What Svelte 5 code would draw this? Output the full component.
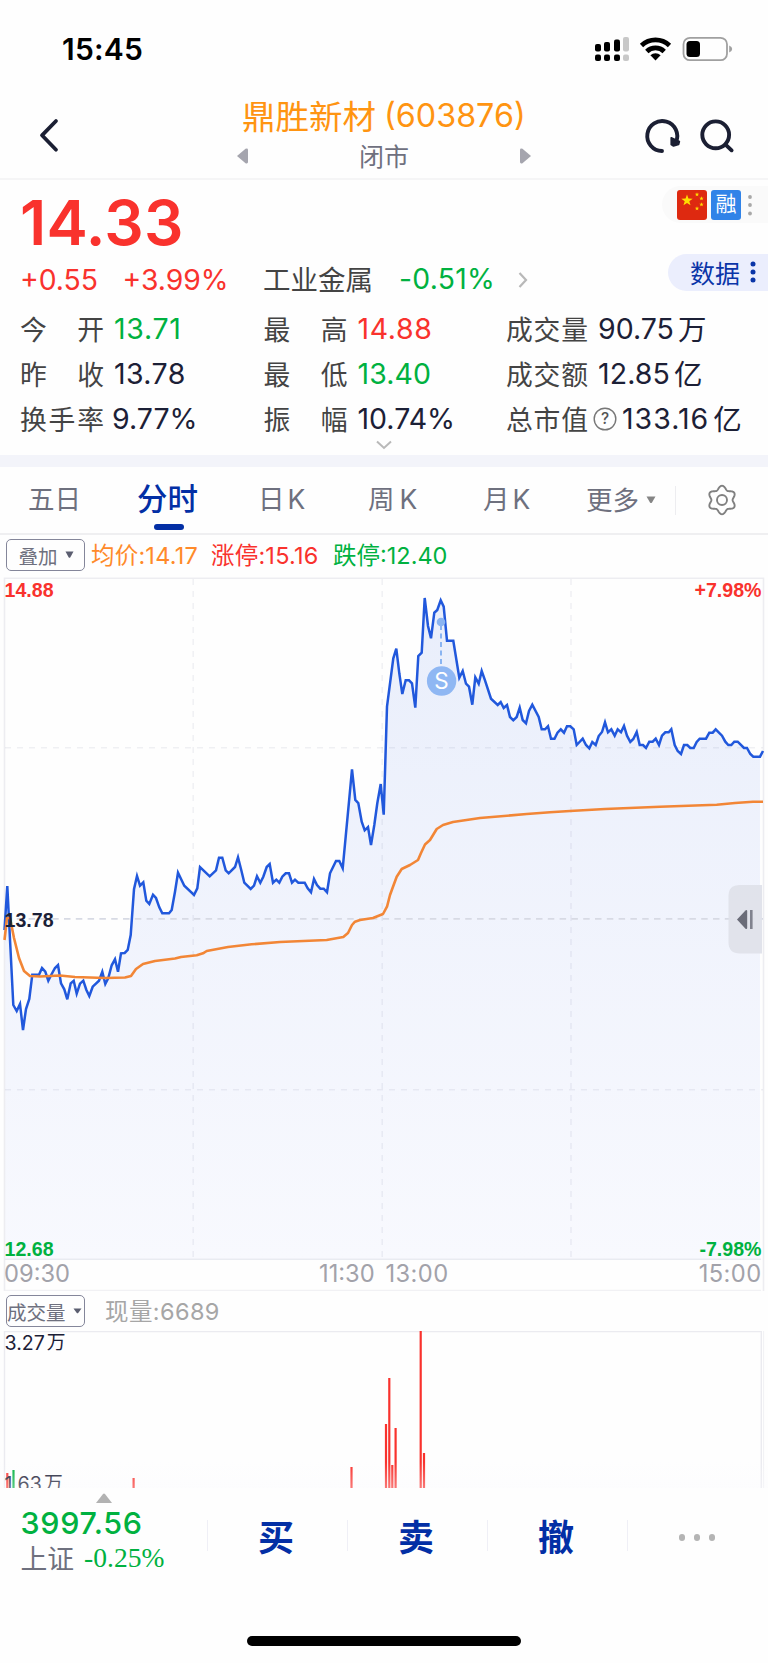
<script>
  const quotes = [
    [
      { label: ['今', '开'], value: '13.71', tone: 'down', space: 0.7 },
      { label: ['最', '高'], value: '14.88', tone: 'up', space: 0.6 },
      { label: ['成', '交', '量'], value: '90.75', unit: '万', space: 0 }
    ],
    [
      { label: ['昨', '收'], value: '13.78', space: 0.4 },
      { label: ['最', '低'], value: '13.40', tone: 'down', space: 0.1 },
      { label: ['成', '交', '额'], value: '12.85', unit: '亿', space: 0.1 }
    ],
    [
      { label: ['换', '手', '率'], value: '9.77%', near: true, space: 0 },
      { label: ['振', '幅'], value: '10.74%', space: 0 },
      { label: ['总', '市', '值'], value: '133.16', unit: '亿', help: true, space: 1 }
    ]
  ];

  // Chart coordinates: the plot's own svg starts at page y = 573.
  const TOP = 573;
  const price = `4.5,930 7.3,886 13.3,1005 16.7,1011 20,1004 23,1030 26,1009 29.3,999 32.3,974.7 39,974.7 42,968 45.3,971.7 48.3,980.7 51.7,974 55,968 58,965 61,983.3 64.3,989.3 67.3,999.3 70.7,983.3 73.7,980.7 76.7,993.7 80,983.7 83.3,980.7 86.3,989.7 89.3,996 92.7,986.7 99,980.7 102.3,971.7 105.3,984 108.3,978 111.7,965.3 115,959.3 118,971.7 121,953.3 124.7,953 127.7,950 130.7,935 134,889.3 137,876 140,885.7 143.3,882.3 146.3,900.7 149.3,904 153,894.7 156,898 159.3,907.3 162.3,913.3 169,913.3 171.7,910 175,891.7 178,872.7 184.3,885.7 194,895 197.3,888.3 200,867 209.7,876.3 216,870.3 219,857.7 222.3,857.7 225.7,870.3 228.7,873.3 235,867 238,857.3 241.3,870.3 244.3,882.7 250.7,889 254,885.7 257,876.3 260.3,882.7 263.3,876.7 266.7,867 269.7,864 273,882.7 276.3,879.7 279.3,882.7 282.3,876.7 285.7,873.3 289,873.3 292,882.7 295,879.7 298.3,882.7 304.7,882.7 307.7,888.3 311,892.3 314,879 317,885 320.3,888.7 323.7,888.7 327,892.3 330,873.3 336,861 339.3,861 342.7,868.3 345.7,836.7 349,801.7 352,769.3 355.3,800 358.3,803 361.7,821.7 364.7,830.3 368,827 371,845 374.3,825 377.3,803.3 380.7,784 383.7,814.7 387,706.7 393.3,658.3 396.3,648.7 399.3,673.3 402.3,694 405.7,680.3 409,680.3 412,683.3 415.3,707.7 418.3,656 421.7,652.7 424.7,598 428,626 431,638.3 434.3,612.7 437.3,610 440.7,600.3 443.7,606.7 447,640.7 453.3,640.7 459.3,677.7 462.7,671 466,683.7 469,686.7 472.3,704.7 475.3,677.3 478.7,683.7 481.7,671 485,680.3 491,698.7 497.7,705 500.7,702 503.7,708 507,705 510,717 513.3,720.3 516.7,717 519.7,707.7 522.7,720 526,723.3 529,711 532.3,704.7 538.7,717 541.7,729.3 545,729.3 548,726.3 551,738.7 554.5,738.7 557.5,732.7 560.8,729.3 564,732.7 567,726.3 570.3,726.3 573.7,729.3 576.7,745 582.7,738.7 586,745 589.3,748.3 592.3,742 595.7,745 598.7,736 602,732 605,722.3 608,732.3 611.3,729.3 614.7,735.7 617.7,729.3 621,732.3 624,726 627,735.7 630.3,742 633.3,739 636.7,732 639.7,745 643,745 646,748 649.3,741.7 652.7,741.7 655.7,738.7 659,745 662,735.7 665.3,732.3 668.7,732.3 671.3,729.3 674.7,745 677.7,751 681,754 684,745 687.3,745 690.3,748 693.7,748 696.7,742 699.7,738.7 706,738.7 709.3,732.7 712.7,732.7 715.7,729.3 722,735.7 725.3,741.7 728.3,745 731.3,745 734.3,741.7 737.7,741.7 744,748 747,748 750.3,754 753.3,756.7 760,756.7`;
  const average = `4.5,940 7,918 10,918 14,938 19,958 24,971 30,976 40,976.5 50,976 60,975.5 75,977 105,978 125,977.5 131,976 136,969 143,964 155,961 167,959.5 175,958.5 181,957 196.7,955.3 203,953.3 206.7,951 228,947 251.7,944.3 280,942 326.7,940 343.3,937 348,933 352,925 355,921.7 360,920 373,918 383,914 387,906.7 390,895 393,886.7 396.7,876.7 401.7,869 410,865 418,860 421,853 425,844.5 430,840 436.7,829 443,825 453,822 480,818 526.7,814 550,812.3 570,811 605,809 660,806.7 716.7,804.7 735,803 753,801.7 763,801.7`;
  const area = `4.5,1259 ${price} 760,1259`;

  const bars = [
    [7.3, 1473, 'red'], [13.5, 1470, 'green'], [133.6, 1478, 'red'], [351.5, 1467, 'red'],
    [386, 1424, 'red'], [389.3, 1378, 'red'], [392.3, 1465, 'red'], [395.6, 1428, 'red'],
    [420.7, 1331, 'red'], [424, 1453, 'red']
  ];
  const actions = ['买', '卖', '撤'];

  const star = (cx, cy, r) =>
    Array.from({ length: 10 }, (_, i) => {
      const a = -Math.PI / 2 + (i * Math.PI) / 5;
      const d = i % 2 ? r * 0.4 : r;
      return `${cx + d * Math.cos(a)},${cy + d * Math.sin(a)}`;
    }).join(' ');

  // Six-lobed gear outline, one lobe pointing straight up.
  const gear = Array.from({ length: 120 }, (_, i) => {
    const a = (i * Math.PI) / 60;
    const r = 12.4 + 1.8 * Math.cos(6 * a);
    return `${(16 + r * Math.sin(a)).toFixed(2)},${(16 - r * Math.cos(a)).toFixed(2)}`;
  }).join(' ');
</script>

<div class="screen">
  <div class="status">
    <span class="clock">15:45</span>
    <svg class="sysicons" width="140" height="28" viewBox="594 35 140 28">
      <g fill="#000">
        <rect x="595" y="44" width="6" height="7.5" rx="2" />
        <rect x="604" y="42" width="6" height="9.5" rx="2" />
        <rect x="614" y="39.5" width="6" height="12" rx="2" />
        <rect x="595" y="54.5" width="6" height="6.5" rx="2" />
        <rect x="604" y="54.5" width="6" height="6.5" rx="2" />
        <rect x="614" y="54.5" width="6" height="6.5" rx="2" />
      </g>
      <g fill="#c8c8c8">
        <rect x="623" y="37" width="6" height="14.5" rx="2" />
        <rect x="623" y="54.5" width="6" height="6.5" rx="2" />
      </g>
      <g fill="none" stroke="#000" stroke-width="4.8">
        <path d="M641.5 45.5A20.5 20.5 0 0 1 669.5 45.5" />
        <path d="M646.8 51.4A12.6 12.6 0 0 1 664.2 51.4" />
      </g>
      <path d="M650.4 55.2A7.4 7.4 0 0 1 660.6 55.2L655.5 60.6Z" />
      <rect x="683.5" y="37.8" width="43.5" height="22.4" rx="6.5" fill="none" stroke="#a0a0a0" stroke-width="1.8" />
      <rect x="686.5" y="41" width="13.5" height="16" rx="3.5" />
      <path d="M729.2 45.5q3 1.2 3 3.5t-3 3.5z" fill="#a0a0a0" />
    </svg>
  </div>

  <header>
    <svg class="back" width="24" height="36" viewBox="37 117 24 36">
      <path d="M56 121L42 135.3L56 149.7" fill="none" stroke="#1b1f33" stroke-width="3.8" stroke-linecap="round" stroke-linejoin="round" />
    </svg>
    <div class="heading">
      <div class="title"><span class="name">鼎胜新材</span><span class="code">(603876)</span></div>
      <div class="session">
        <svg width="12" height="16"><path d="M0 8L8.5 .8Q11 0 11 2V14Q11 16 8.5 15.2Z" fill="#a5a5ae" /></svg>
        <span>闭市</span>
        <svg width="12" height="16"><path d="M12 8L3.5 .8Q1 0 1 2V14Q1 16 3.5 15.2Z" fill="#a5a5ae" /></svg>
      </div>
    </div>
    <svg class="tools" width="94" height="40" viewBox="643 116 94 40">
      <g fill="none" stroke="#1b1f33" stroke-width="3.9" stroke-linecap="round">
        <path d="M662 151A15 15 0 1 1 676 142" />
        <circle cx="715.7" cy="134.8" r="13.4" />
        <path d="M725.8 144.8L731.6 150.3" />
      </g>
      <path d="M671.2 137.8L679.4 141.6L678.6 144.6L673.5 146L671.2 144.6Z" fill="#1b1f33" stroke="#1b1f33" stroke-width="1.6" stroke-linejoin="round" />
    </svg>
  </header>

  <section class="quote">
    <div class="top">
      <div class="last up">14.33</div>
      <div class="badges">
        <svg width="30" height="30" viewBox="0 0 30 30">
          <rect width="30" height="30" rx="3" fill="#de2910" />
          <g fill="#ffde00">
            <polygon points={star(10, 10.5, 6)} />
            <polygon points={star(20, 4.5, 2.3)} />
            <polygon points={star(24.5, 8.5, 2.3)} />
            <polygon points={star(24.5, 14.5, 2.3)} />
            <polygon points={star(20, 18.5, 2.3)} />
          </g>
        </svg>
        <span class="margin">融</span>
        <svg width="6" height="22" viewBox="0 0 6 22" fill="#a8a8a8"><circle cx="3" cy="3" r="1.9" /><circle cx="3" cy="11" r="1.9" /><circle cx="3" cy="19.5" r="1.9" /></svg>
      </div>
    </div>

    <div class="change">
      <span class="delta up">+0.55</span>
      <span class="pct up">+3.99%</span>
      <span class="sector">工业金属</span>
      <span class="sectorpct down">-0.51%</span>
      <svg width="10" height="18" viewBox="0 0 10 18"><path d="M1.5 2L8 9L1.5 16" fill="none" stroke="#b8b8b8" stroke-width="2.2" /></svg>
      <div class="data">
        <span>数据</span>
        <svg width="6" height="24" viewBox="0 0 6 24" fill="#0a35a8"><circle cx="3" cy="4" r="2.5" /><circle cx="3" cy="12" r="2.5" /><circle cx="3" cy="20" r="2.5" /></svg>
      </div>
    </div>

    {#each quotes as row}
      <div class="row">
        {#each row as q}
          <div class="cell">
            <span class="label">{#each q.label as ch}<i>{ch}</i>{/each}</span>
            {#if q.help}
              <svg class="help" width="24" height="24" viewBox="0 0 24 24">
                <circle cx="12" cy="12" r="10.8" fill="none" stroke="#777" stroke-width="1.4" />
                <text x="12" y="17.4" text-anchor="middle">?</text>
              </svg>
            {/if}
            <span class="value {q.tone ?? ''}" class:near={q.near} class:tight={q.help} style="letter-spacing: {q.space}px">{q.value}</span>
            {#if q.unit}<span class="unit">{q.unit}</span>{/if}
          </div>
        {/each}
      </div>
    {/each}
    <svg class="more" width="18" height="10" viewBox="0 0 18 10"><path d="M2 1.5L9 8L16 1.5" fill="none" stroke="#b9b9b9" stroke-width="2" /></svg>
  </section>

  <nav>
    <span class="t1">五日</span>
    <span class="active">分时</span>
    <span class="t3">日<b>K</b></span>
    <span class="t4">周<b>K</b></span>
    <span class="t5">月<b>K</b></span>
    <span class="t6">更多<svg width="10" height="8"><path d="M.5 .5H9.5L6 6.6Q5 7.6 4 6.6Z" fill="#858585" /></svg></span>
    <span class="rule"></span>
    <svg class="gear" width="32" height="32" viewBox="0 0 32 32" fill="none" stroke="#808080" stroke-width="1.9" stroke-linejoin="round">
      <polygon points={gear} />
      <circle cx="16" cy="16" r="5" />
    </svg>
  </nav>

  <div class="legend">
    <span class="pick"><em>叠加</em><svg width="9" height="8"><path d="M.5 .5H8.5L5.4 6.2Q4.5 7.2 3.6 6.2Z" fill="#5b5e70" /></svg></span>
    <span class="avg">均价:14.17</span>
    <span class="hi up">涨停:15.16</span>
    <span class="lo down">跌停:12.40</span>
  </div>

  <svg class="plot" width="768" height="718" viewBox="0 {TOP} 768 718">
    <defs>
      <linearGradient id="fill" gradientUnits="userSpaceOnUse" x1="0" y1="598" x2="0" y2="1259">
        <stop offset="0" stop-color="#e9eefb" />
        <stop offset="1" stop-color="#f8f9fe" />
      </linearGradient>
    </defs>
    <polygon points={area} fill="url(#fill)" />
    <g fill="none" stroke="#e9ebf1" stroke-width="1.6">
      <path d="M4.5 1291V578.3H763.5V1291" stroke="#ededf1" />
      <path d="M4.5 1259.3H761" />
      <path d="M4.5 1290.5H761" stroke="#f1f1f4" />
    </g>
    <g fill="none" stroke="#5a6280" stroke-opacity=".09" stroke-width="1.5" stroke-dasharray="6 6">
      <path d="M193.2 579V1259M382.2 579V1259M571 579V1259" />
      <path d="M5 747.7H763M5 1089.7H763" />
    </g>
    <path d="M5 918.9H763" stroke="#d7dae4" stroke-width="1.9" stroke-dasharray="6.5 5.3" />
    <polyline points="{price} 763,751" fill="none" stroke="#2158dc" stroke-width="2.5" />
    <polyline points={average} fill="none" stroke="#f28636" stroke-width="2.6" stroke-linejoin="round" />

    <path d="M441 625V668" stroke="#8ab4f1" stroke-width="2" stroke-dasharray="5 3.5" />
    <circle cx="441" cy="622" r="4.3" fill="#8ab4f1" />
    <circle cx="441.6" cy="681" r="14.7" fill="#8fb7f3" />
    <text class="mark" x="441.4" y="689.2" text-anchor="middle">S</text>

    <path d="M762 885H740Q728.5 885 728.5 896V942Q728.5 953.5 740 953.5H762Z" fill="#dfe1ea" fill-opacity=".94" />
    <path d="M737 919.5L745.5 910.4Q747 909.4 747.2 911V928Q747 929.6 745.5 928.7Z" fill="#6a6c78" />
    <path d="M751.3 910V929" stroke="#80828e" stroke-width="2.6" />

    <g class="axis">
      <text class="up" x="4.5" y="597">14.88</text>
      <text class="up" x="761.5" y="597" text-anchor="end">+7.98%</text>
      <text x="4.5" y="927">13.78</text>
      <text class="down" x="4.5" y="1256">12.68</text>
      <text class="down" x="761.5" y="1256" text-anchor="end">-7.98%</text>
    </g>
    <g class="time">
      <text x="4" y="1282.3">09:30</text>
      <text x="319" y="1282.3">11:30</text>
      <text x="385.5" y="1282.3" letter-spacing=".4">13:00</text>
      <text x="761.5" y="1282.3" text-anchor="end" letter-spacing=".4">15:00</text>
    </g>
  </svg>

  <div class="volhead">
    <span class="pick wide"><em>成交量</em><svg width="9" height="8"><path d="M.5 1.5H8.5L5.4 5.8Q4.5 6.8 3.6 5.8Z" fill="#5b5e70" /></svg></span>
    <span class="now">现量:6689</span>
  </div>

  <svg class="volume" width="768" height="157" viewBox="0 1331 768 157">
    <defs>
      <linearGradient id="haze" x1="0" y1="0" x2="0" y2="1">
        <stop offset="0" stop-color="#fafafd" stop-opacity="0" />
        <stop offset="1" stop-color="#fafafd" stop-opacity=".35" />
      </linearGradient>
    </defs>
    <path d="M4.5 1488V1331.6H761.3V1488" fill="none" stroke="#ebebf0" stroke-width="1.4" />
    <path d="M763.6 1331V1488" stroke="#f1f1f4" />
    <text x="4.5" y="1349.6">3.27<tspan dx="2" dy="-1">万</tspan></text>
    {#each bars as [x, y, tone]}
      <path class={tone} d="M{x} {y}V1488" />
    {/each}
    <text x="4.5" y="1491">1.63<tspan dx="2" dy="-1">万</tspan></text>
    <rect x="0" y="1462" width="768" height="26" fill="url(#haze)" />
  </svg>

  <footer>
    <div class="index">
      <svg width="18" height="10"><path d="M1 10L8 .9Q9 0 10 .9L17 10Z" fill="#b2b2b2" /></svg>
      <strong class="down">3997.56</strong>
      <div><span class="exch">上证</span><span class="down serif">-0.25%</span></div>
    </div>
    {#each actions as action}
      <button>{action}</button>
    {/each}
    <div class="dots"><i></i><i></i><i></i></div>
  </footer>
  <div class="home"></div>
</div>

<style>
  :global(body) {
    background: #fff;
  }
  .screen {
    width: 768px;
    height: 1663px;
    display: flex;
    flex-direction: column;
    overflow: hidden;
    background: #fefefe;
    color: #1c2036;
    font-family: Inter, 'Noto Sans CJK SC', sans-serif;
    white-space: nowrap;
  }
  svg {
    display: block;
    flex: none;
  }
  .up {
    color: #f9322d;
    fill: #f9322d;
  }
  .down {
    color: #00b140;
    fill: #00b140;
  }
  .status {
    height: 98px;
    display: flex;
    justify-content: space-between;
    padding: 0 34px 0 62px;
  }
  .clock {
    font-size: 30px;
    font-weight: 600;
    line-height: 98px;
    letter-spacing: 0.2px;
    color: #000;
  }
  .sysicons {
    margin-top: 35px;
  }
  header {
    height: 82px;
    box-sizing: border-box;
    border-bottom: 2px solid #f5f5f6;
    display: flex;
    padding: 0 31px 0 37px;
  }
  .back {
    margin-top: 19px;
  }
  .tools {
    margin-top: 18px;
  }
  .heading {
    width: 300px;
    margin: 0 auto 0 174px;
  }
  .title {
    height: 35px;
    display: flex;
    align-items: center;
    color: #ff9411;
    margin-left: 7px;
  }
  .name {
    font-size: 33.5px;
    width: 142px;
    margin-top: -3px;
  }
  .code {
    font-size: 32.3px;
  }
  .session {
    display: flex;
    align-items: center;
    justify-content: space-between;
    height: 46px;
    padding: 0 4px 0 2px;
    color: #6f707e;
    font-size: 25px;
  }
  .session span {
    margin-top: -2px;
  }
  .top {
    display: flex;
    justify-content: space-between;
    height: 74px;
  }
  .last {
    font-size: 62px;
    font-weight: 600;
    line-height: 86px;
    padding-left: 20px;
    letter-spacing: 0.2px;
  }
  .badges {
    margin-top: 6px;
    width: 106px;
    height: 37px;
    box-sizing: border-box;
    padding-left: 15px;
    border-radius: 19px 0 0 19px;
    background: #fafafa;
    display: flex;
    align-items: center;
    gap: 4px;
  }
  .margin {
    width: 30px;
    height: 30px;
    border-radius: 3px;
    background: #3083e8;
    color: #fff;
    font-size: 21px;
    line-height: 28px;
    text-align: center;
    margin-right: 2px;
  }
  .change {
    display: flex;
    align-items: center;
    height: 52px;
    font-size: 28.3px;
    padding-left: 20px;
  }
  .delta { width: 102.5px; }
  .pct { width: 140.5px; }
  .sector {
    width: 136px;
    font-size: 27.5px;
    color: #444;
    margin-top: -4px;
  }
  .sectorpct {
    width: 119px;
    margin-top: -3px;
    letter-spacing: 0.3px;
  }
  .data {
    margin-left: auto;
    width: 100px;
    height: 37px;
    box-sizing: border-box;
    border-radius: 19px 0 0 19px;
    background: #ebeefd;
    color: #0a35a8;
    font-size: 25px;
    display: flex;
    align-items: center;
    gap: 9.5px;
    padding-left: 22px;
    margin-top: -16px;
  }
  .data span { margin-top: -1px; }
  .row {
    display: grid;
    grid-template-columns: 243.5px 242.5px 1fr;
    height: 45px;
    padding-left: 20px;
    font-size: 28.5px;
  }
  .cell {
    display: flex;
    align-items: center;
  }
  .label {
    width: 84px;
    display: flex;
    justify-content: space-between;
    font-size: 26.8px;
    color: #444;
    margin-top: -1px;
  }
  .cell:last-child .label { width: 82px; }
  .label i { font-style: normal; }
  .value { margin-left: 10px; }
  .near { margin-left: 8px; }
  .tight { margin-left: 5px; }
  .unit {
    margin: -3px 0 0 4px;
    font-size: 28.5px;
  }
  .help { margin-left: 5px; }
  .help text {
    font: 500 15.5px Inter, sans-serif;
    fill: #555;
  }
  .more {
    margin: -1px auto 0 375px;
  }
  .quote {
    height: 275px;
    box-sizing: border-box;
  }
  nav {
    border-top: 12px solid #f3f4fa;
    border-bottom: 2px solid #efeff1;
    height: 66px;
    display: grid;
    grid-template-columns: 137px 121px 110px 115px 103px 88.5px 31px auto;
    align-items: center;
    color: #6e707e;
    font-size: 26.5px;
  }
  nav > span { height: 66px; line-height: 65px; }
  nav b { font-weight: 400; margin-left: 3px; }
  .t4 b { margin-left: 5px; }
  .t1 { padding-left: 28px; }
  .active {
    color: #032fa5;
    font-size: 30.5px;
    font-weight: 500;
    display: flex;
    flex-direction: column;
  }
  nav > .active { line-height: 63px; }
  .active::after {
    content: '';
    width: 30px;
    height: 6px;
    flex: none;
    border-radius: 3px;
    background: #032fa5;
    margin: -6px 0 0 17px;
  }
  .t6 {
    display: flex;
    align-items: center;
    gap: 7px;
  }
  nav > .rule {
    width: 1.5px;
    height: 29px;
    background: #ededf0;
  }
  .legend {
    height: 38px;
    display: flex;
    align-items: center;
    padding: 2px 0 0 6px;
    box-sizing: border-box;
    font-size: 23.5px;
  }
  .legend > span:not(.pick) { margin-top: -2px; }
  .pick {
    box-sizing: border-box;
    width: 79px;
    height: 32px;
    flex: none;
    border: 1.6px solid #84869a;
    border-radius: 5px;
    display: flex;
    align-items: center;
    gap: 7px;
    padding-left: 11.5px;
    font-size: 19.5px;
    color: #6e707e;
  }
  .pick em { font-style: normal; }
  .wide { padding-left: 0; }
  .avg {
    color: #ff8a2a;
    width: 120px;
    margin-left: 6px;
    letter-spacing: 0.2px;
  }
  .hi {
    width: 122px;
    letter-spacing: 0.2px;
  }
  .mark {
    font: 400 22.5px Inter, sans-serif;
    fill: #fff;
  }
  .axis {
    font: 700 19.6px 'Liberation Sans', sans-serif;
    fill: #1c2036;
  }
  .time {
    font-size: 23.7px;
    fill: #a2a2aa;
  }
  .volhead {
    height: 40px;
    display: flex;
    align-items: center;
    gap: 20px;
    padding-left: 6px;
    font-size: 23.5px;
    color: #a6a6a6;
  }
  .now {
    letter-spacing: 0.4px;
    margin-top: -3px;
  }
  .volume { font-size: 19.6px; fill: #1c2036; }
  .volume tspan { font-size: 18.8px; }
  .red { stroke: #f9322d; stroke-width: 2.2; }
  .green { stroke: #00b140; stroke-width: 2.2; }
  footer {
    height: 100px;
    display: grid;
    grid-template-columns: 207px 140px 140px 140px 1fr;
    padding-top: 5px;
    box-sizing: border-box;
  }
  .index {
    padding-left: 20.5px;
    display: flex;
    flex-direction: column;
  }
  .index > svg { margin-left: 74px; }
  .index strong {
    font-size: 30.5px;
    font-weight: 500;
    line-height: 39px;
    letter-spacing: 0.65px;
  }
  .index div {
    display: flex;
    align-items: center;
    gap: 10px;
    height: 32px;
    font-size: 26.8px;
    color: #6e707e;
  }
  .exch { margin-top: -1px; }
  .index .serif {
    font-family: 'Liberation Serif', serif;
    font-size: 27.5px;
    margin-top: -1px;
  }
  button {
    border: 0;
    padding: 0 3px 0 0;
    margin-top: 27px;
    height: 31px;
    border-left: 1.5px solid #efeff6;
    background: none;
    color: #032fa5;
    font: 700 36px 'Noto Sans CJK SC', sans-serif;
    line-height: 31px;
  }
  .dots {
    margin-top: 27px;
    height: 31px;
    border-left: 1.5px solid #efeff6;
    display: flex;
    align-items: center;
    justify-content: center;
    gap: 8.5px;
    padding: 4px 2px 0 0;
    box-sizing: border-box;
  }
  .dots i {
    width: 6.5px;
    height: 6.5px;
    border-radius: 50%;
    background: #b4b4b4;
  }
  .home {
    width: 274px;
    height: 10px;
    border-radius: 5px;
    background: #000;
    margin: 48px auto 0;
  }
</style>
